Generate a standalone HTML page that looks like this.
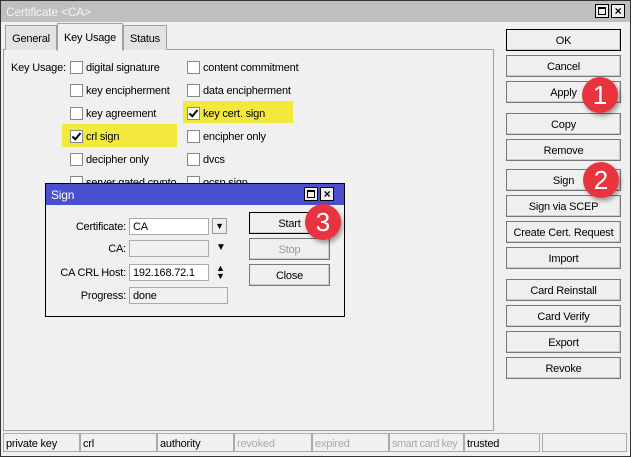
<!DOCTYPE html><html><head><style>
*{box-sizing:border-box;margin:0;padding:0}
body{width:631px;height:457px;overflow:hidden;background:#f0f0f0;font-family:"Liberation Sans",sans-serif;font-size:11px;color:#000;position:relative;letter-spacing:-0.2px;white-space:nowrap}
.a{position:absolute}
#win{left:0;top:0;width:631px;height:457px;border:1px solid #333}
.tb{left:1px;top:1px;width:629px;height:21px;background:#bfbfbf;color:#f4f4f4;font-size:12px;padding:4px 5px}
.wb{width:14px;height:14px;border:1px solid #000;background:#eee;top:4px}
.panel{left:3px;top:49px;width:491px;height:382px;border:1px solid #a0a0a0;background:#f0f0f0}
.tab{height:25px;border:1px solid #a0a0a0;border-bottom:none;background:#e3e3e3;padding:7px 0 0;text-align:center;font-size:11px}
.cb{width:13px;height:13px;border:1px solid #888;background:#fff}
.cb.k:after{content:"";position:absolute;left:3px;top:0px;width:3px;height:7px;border:solid #000;border-width:0 2px 2px 0;transform:rotate(40deg)}
.lb{font-size:11px}
.hl{background:#f2e93c}
.btn{left:506px;width:115px;height:22px;border:1px solid #777;background:#efefef;text-align:center;padding-top:5px;font-size:11px;box-shadow:inset -1px -1px #ccc}
.dlg{left:45px;top:183px;width:300px;height:134px;border:1px solid #000;background:#f0f0f0}
.dt{left:0;top:0;width:298px;height:21px;background:#4a4fcf;color:#fff;font-size:12px;padding:4px 5px}
.in{height:17px;border:1px solid #aaa;background:#fff;padding:2px 3px;font-size:11px}
.dl{width:80px;text-align:right;font-size:11px}
.sb{height:19px;top:433px;border:1px solid #aaa;padding:4px 2px;font-size:11px;overflow:hidden}
.circ{width:36px;height:36px;border-radius:50%;background:#e8343f;color:#fff;font-size:26px;text-align:center;line-height:36px;box-shadow:2px 3px 4px rgba(0,0,0,.35);letter-spacing:0}
</style></head><body>
<div class="a" id="win"></div>
<div class="a tb">Certificate &lt;CA&gt;</div>
<div class="a wb" style="left:595px"><div class="a" style="left:2px;top:2px;width:8px;height:8px;border:1px solid #000;border-top-width:2px"></div></div>
<div class="a wb" style="left:611px;font-weight:bold;font-size:12px;line-height:12px;text-align:center">×</div>
<div class="a panel"></div>
<div class="a tab" style="left:5px;top:25px;width:52px">General</div>
<div class="a tab" style="left:57px;top:23px;width:66px;height:28px;background:#f0f0f0;padding-top:8px">Key Usage</div>
<div class="a tab" style="left:123px;top:25px;width:44px">Status</div>
<div class="a lb" style="left:11px;top:62px">Key Usage:</div>
<div class="a hl" style="left:62px;top:124px;width:115px;height:23px"></div>
<div class="a hl" style="left:183px;top:101px;width:110px;height:22px"></div>
<div class="a cb" style="left:70px;top:61px"></div><div class="a lb" style="left:86px;top:62px">digital signature</div>
<div class="a cb" style="left:70px;top:84px"></div><div class="a lb" style="left:86px;top:85px">key encipherment</div>
<div class="a cb" style="left:70px;top:107px"></div><div class="a lb" style="left:86px;top:108px">key agreement</div>
<div class="a cb k" style="left:70px;top:130px"></div><div class="a lb" style="left:86px;top:131px">crl sign</div>
<div class="a cb" style="left:70px;top:153px"></div><div class="a lb" style="left:86px;top:154px">decipher only</div>
<div class="a cb" style="left:70px;top:176px"></div><div class="a lb" style="left:86px;top:177px">server gated crypto</div>
<div class="a cb" style="left:187px;top:61px"></div><div class="a lb" style="left:203px;top:62px">content commitment</div>
<div class="a cb" style="left:187px;top:84px"></div><div class="a lb" style="left:203px;top:85px">data encipherment</div>
<div class="a cb k" style="left:187px;top:107px"></div><div class="a lb" style="left:203px;top:108px">key cert. sign</div>
<div class="a cb" style="left:187px;top:130px"></div><div class="a lb" style="left:203px;top:131px">encipher only</div>
<div class="a cb" style="left:187px;top:153px"></div><div class="a lb" style="left:203px;top:154px">dvcs</div>
<div class="a cb" style="left:187px;top:176px"></div><div class="a lb" style="left:203px;top:177px">ocsp sign</div>

<div class="a btn" style="top:29px;border:1px solid #000">OK</div>
<div class="a btn" style="top:55px">Cancel</div>
<div class="a btn" style="top:81px">Apply</div>
<div class="a btn" style="top:113px">Copy</div>
<div class="a btn" style="top:139px">Remove</div>
<div class="a btn" style="top:169px">Sign</div>
<div class="a btn" style="top:195px">Sign via SCEP</div>
<div class="a btn" style="top:221px">Create Cert. Request</div>
<div class="a btn" style="top:247px">Import</div>
<div class="a btn" style="top:279px">Card Reinstall</div>
<div class="a btn" style="top:305px">Card Verify</div>
<div class="a btn" style="top:331px">Export</div>
<div class="a btn" style="top:357px">Revoke</div>

<div class="a dlg">
<div class="a dt">Sign</div>
<div class="a wb" style="left:258px;top:3px"><div class="a" style="left:2px;top:2px;width:8px;height:8px;border:1px solid #000;border-top-width:2px"></div></div>
<div class="a wb" style="left:274px;top:3px;font-weight:bold;font-size:12px;line-height:12px;text-align:center">×</div>
<div class="a dl" style="left:0;top:37px">Certificate:</div>
<div class="a in" style="left:83px;top:34px;width:80px">CA</div>
<div class="a" style="left:166px;top:34px;width:15px;height:16px;border:1px solid #999;background:#eee;font-size:9px;text-align:center;line-height:14px">▼</div>
<div class="a dl" style="left:0;top:59px">CA:</div>
<div class="a in" style="left:83px;top:56px;width:80px;background:#f0f0f0"></div>
<div class="a" style="left:170px;top:58px;font-size:10px">▼</div>
<div class="a dl" style="left:0;top:83px">CA CRL Host:</div>
<div class="a in" style="left:83px;top:80px;width:80px">192.168.72.1</div>
<div class="a" style="left:170px;top:80px;font-size:9px;line-height:8px">▲<br>▼</div>
<div class="a dl" style="left:0;top:106px">Progress:</div>
<div class="a in" style="left:83px;top:103px;width:99px;background:#f0f0f0">done</div>
<div class="a btn" style="left:203px;top:28px;width:81px;border:1px solid #000">Start</div>
<div class="a btn" style="left:203px;top:54px;width:81px;color:#999">Stop</div>
<div class="a btn" style="left:203px;top:80px;width:81px">Close</div>
</div>

<div class="a sb" style="left:3px;width:77px">private key</div>
<div class="a sb" style="left:80px;width:77px">crl</div>
<div class="a sb" style="left:157px;width:77px">authority</div>
<div class="a sb" style="left:234px;width:78px;color:#aaa">revoked</div>
<div class="a sb" style="left:312px;width:77px;color:#aaa">expired</div>
<div class="a sb" style="left:389px;width:75px;color:#aaa;letter-spacing:-0.5px">smart card key</div>
<div class="a sb" style="left:464px;width:76px">trusted</div>
<div class="a sb" style="left:542px;width:85px"></div>

<div class="a circ" style="left:582px;top:77px">1</div>
<div class="a circ" style="left:583px;top:162px">2</div>
<div class="a circ" style="left:305px;top:204px">3</div>
</body></html>
